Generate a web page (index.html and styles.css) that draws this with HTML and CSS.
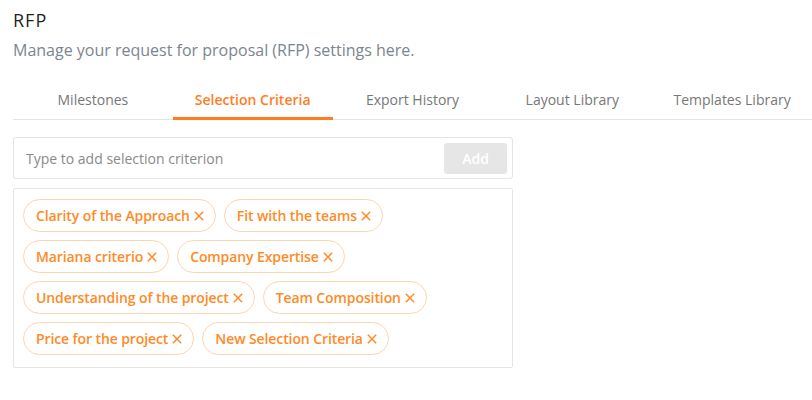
FILE: index.html
```html
<!DOCTYPE html>
<html lang="en">
<head>
    <meta charset="UTF-8">
    <meta name="viewport" content="width=device-width, initial-scale=1.0">
    <title>RFP Settings</title>
    <link rel="stylesheet" href="styles.css">
</head>
<body>
    <div class="page">
        <h1 class="title">RFP</h1>
        <p class="subtitle">Manage your request for proposal (RFP) settings here.</p>

        <nav class="tabs">
            <a class="tab">Milestones</a>
            <a class="tab active">Selection Criteria</a>
            <a class="tab">Export History</a>
            <a class="tab">Layout Library</a>
            <a class="tab">Templates Library</a>
        </nav>

        <div class="criteria">
            <form class="add-box">
                <input type="text" placeholder="Type to add selection criterion">
                <button type="button" disabled>Add</button>
            </form>

            <ul class="tags">
                <li class="tag">Clarity of the Approach<svg class="remove" viewBox="0 0 12 12"><path d="M1 1L11 11M11 1L1 11"/></svg></li>
                <li class="tag">Fit with the teams<svg class="remove" viewBox="0 0 12 12"><path d="M1 1L11 11M11 1L1 11"/></svg></li>
                <li class="tag">Mariana criterio<svg class="remove" viewBox="0 0 12 12"><path d="M1 1L11 11M11 1L1 11"/></svg></li>
                <li class="tag">Company Expertise<svg class="remove" viewBox="0 0 12 12"><path d="M1 1L11 11M11 1L1 11"/></svg></li>
                <li class="tag">Understanding of the project<svg class="remove" viewBox="0 0 12 12"><path d="M1 1L11 11M11 1L1 11"/></svg></li>
                <li class="tag">Team Composition<svg class="remove" viewBox="0 0 12 12"><path d="M1 1L11 11M11 1L1 11"/></svg></li>
                <li class="tag">Price for the project<svg class="remove" viewBox="0 0 12 12"><path d="M1 1L11 11M11 1L1 11"/></svg></li>
                <li class="tag">New Selection Criteria<svg class="remove" viewBox="0 0 12 12"><path d="M1 1L11 11M11 1L1 11"/></svg></li>
            </ul>
        </div>
    </div>
</body>
</html>
```

FILE: styles.css
```css
body {
    font-family: "Open Sans", Arial, sans-serif;
    margin: 0;
    background-color: #fff;
    color: #333;
}

.page {
    padding: 8px 0 0 13px;
}

.title {
    font-size: 18px;
    font-weight: 400;
    letter-spacing: 1px;
    line-height: 24px;
    margin: 0;
    color: #1f1f1f;
}

.subtitle {
    font-size: 16px;
    line-height: 22px;
    margin: 7px 0 0;
    color: #7b8590;
}

.tabs {
    display: flex;
    margin-top: 23px;
    border-bottom: 1px solid #e2e2e2;
}

.tab {
    width: 160px;
    text-align: center;
    font-size: 14px;
    line-height: 20px;
    padding: 6px 0 7px;
    color: #777;
    border-bottom: 3px solid transparent;
    margin-bottom: -1px;
    cursor: pointer;
}

.tab.active {
    color: #ff7d1f;
    font-weight: 600;
    border-bottom-color: #ff7d1f;
}

.criteria {
    width: 500px;
    margin-top: 17px;
}

.add-box {
    display: flex;
    align-items: center;
    height: 42px;
    box-sizing: border-box;
    padding: 0 5px 0 12px;
    border: 1px solid #e4e4e4;
    border-radius: 3px;
    margin: 0;
}

.add-box input {
    flex: 1;
    border: none;
    outline: none;
    font-family: inherit;
    font-size: 14px;
    color: #333;
    padding: 0;
}

.add-box input::placeholder {
    color: #8a8a8a;
}

.add-box button {
    width: 63px;
    height: 31px;
    border: none;
    border-radius: 3px;
    background-color: #e6e6e6;
    color: #fff;
    font-family: inherit;
    font-size: 14px;
    font-weight: 600;
}

.tags {
    list-style-type: none;
    display: flex;
    flex-wrap: wrap;
    gap: 8px;
    margin: 9px 0 0;
    padding: 10px 9px 12px;
    border: 1px solid #e4e4e4;
    border-radius: 2px;
}

.tag {
    display: flex;
    align-items: center;
    height: 33px;
    box-sizing: border-box;
    padding: 0 11px 0 12px;
    border: 1px solid #fdd4b0;
    border-radius: 17px;
    font-size: 14px;
    font-weight: 600;
    letter-spacing: -0.1px;
    color: #ff8a26;
}

.remove {
    width: 10px;
    height: 10px;
    margin-left: 4px;
    fill: none;
    stroke: #ff8a26;
    stroke-width: 1.8;
    cursor: pointer;
}
```
